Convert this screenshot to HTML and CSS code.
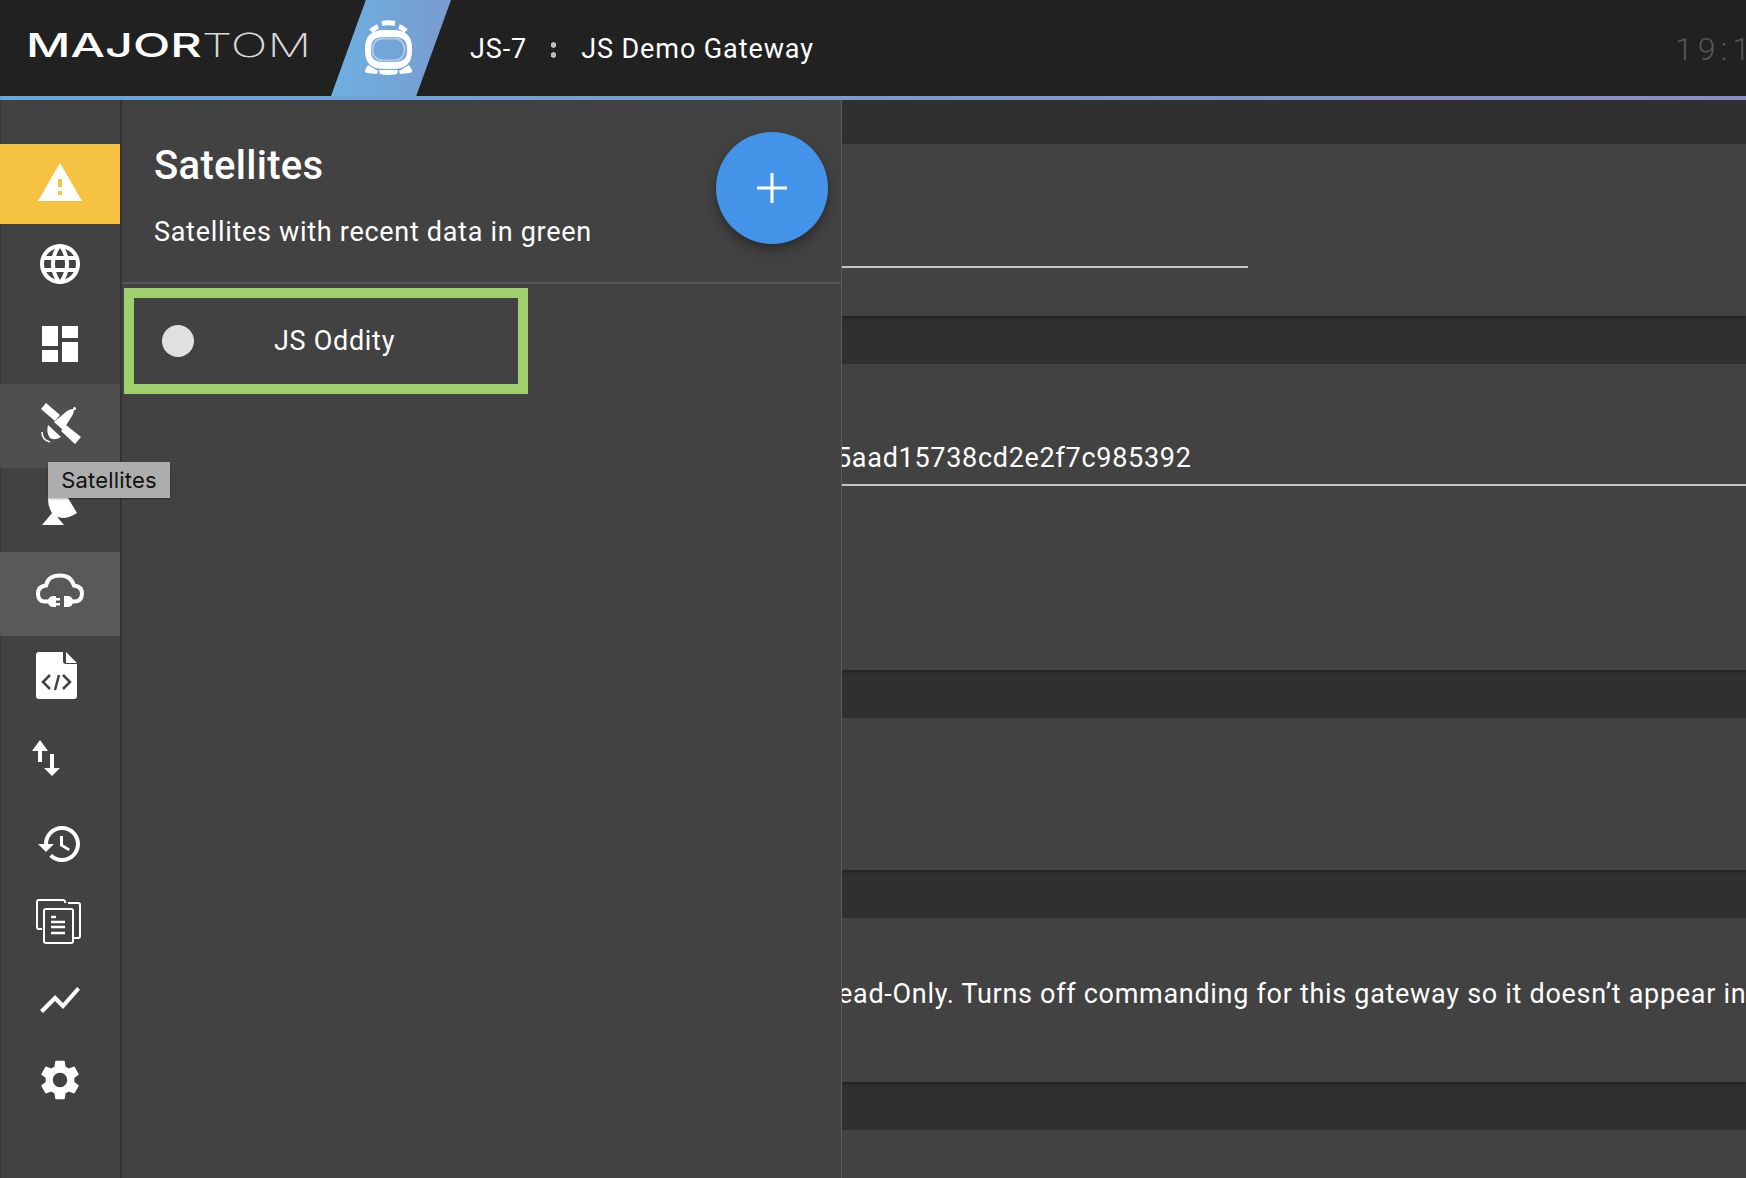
FILE: index.html
```html
<!DOCTYPE html>
<html lang="en">
<head>
    <meta charset="utf-8" />
    <title>Major Tom - JS Demo Gateway</title>
    <link rel="stylesheet" href="styles.css">
</head>
<body>
    <header class="topbar">
        <div class="logo"><span class="logo-text"><b>MAJOR</b>TOM</span></div>
        <div class="mission-badge">
            <svg class="helmet" width="76" height="72" viewBox="0 0 76 72">
                <g fill="none" stroke="#fff" stroke-width="5">
                    <path d="M32 11.500q6.500-1.500 13 0"/>
                    <path d="M21 19q3-3 7-4.500M56 19q-3-3-7-4.500"/>
                </g>
                <path fill-rule="evenodd" fill="#fff" d="M34 18h9q19 0 19 18v3q0 18-19 18h-9q-19 0-19-18v-3q0-18 19-18zM33 25q-12 0-12 11v4q0 10 12 10h11q13 0 13-10v-4q0-11-13-11z"/>
                <rect x="22.500" y="26.500" width="32" height="22" rx="10" fill="none" stroke="#fff" stroke-opacity=".4" stroke-width="2"/>
                <path d="M18 53l10 6-1 3-10-1q-3-1-2-3zM59 53l-10 6 1 3 10-1q3-1 2-3zM29 58h19l-1 4q-8 2-17 0z" fill="#fff"/>
            </svg>
        </div>
        <div class="crumbs">
            <span>JS-7</span>
            <span class="crumb-sep"></span>
            <span>JS Demo Gateway</span>
        </div>
        <div class="clock">19:1</div>
    </header>
    <div class="rainbow"></div>

    <div class="workspace">
        <nav class="rail">
            <a class="rail-item warn">
                <svg width="48" height="48" viewBox="0 0 24 24"><path d="M1 21h22L12 2 1 21zm12-3h-2v-2h2v2zm0-4h-2v-4h2v4z"/></svg>
            </a>
            <a class="rail-item">
                <svg width="48" height="48" viewBox="0 0 24 24"><path d="M11.99 2C6.47 2 2 6.48 2 12s4.47 10 9.99 10C17.52 22 22 17.52 22 12S17.52 2 11.99 2zm6.93 6h-2.95c-.32-1.25-.78-2.45-1.38-3.56 1.84.63 3.37 1.91 4.33 3.56zM12 4.04c.83 1.2 1.48 2.53 1.91 3.96h-3.82c.43-1.43 1.08-2.76 1.91-3.96zM4.26 14C4.1 13.36 4 12.69 4 12s.1-1.36.26-2h3.38c-.08.66-.14 1.32-.14 2 0 .68.06 1.34.14 2H4.26zm.82 2h2.95c.32 1.25.78 2.45 1.38 3.56-1.84-.63-3.37-1.9-4.33-3.56zm2.95-8H5.08c.96-1.66 2.49-2.93 4.33-3.56C8.81 5.55 8.35 6.75 8.03 8zM12 19.96c-.83-1.2-1.48-2.53-1.91-3.96h3.82c-.43 1.43-1.08 2.76-1.91 3.96zM14.34 14H9.66c-.09-.66-.16-1.32-.16-2 0-.68.07-1.35.16-2h4.68c.09.65.16 1.32.16 2 0 .68-.07 1.34-.16 2zm.25 5.56c.6-1.11 1.06-2.31 1.38-3.56h2.95c-.96 1.65-2.49 2.93-4.33 3.56zM16.36 14c.08-.66.14-1.32.14-2 0-.68-.06-1.34-.14-2h3.38c.16.64.26 1.31.26 2s-.1 1.36-.26 2h-3.38z"/></svg>
            </a>
            <a class="rail-item">
                <svg width="48" height="48" viewBox="0 0 24 24"><path d="M3 13h8V3H3v10zm0 8h8v-6H3v6zm10 0h8V11h-8v10zm0-18v6h8V3h-8z"/></svg>
            </a>
            <a class="rail-item hovered">
                <svg width="60" height="60" viewBox="0 1 60 60">
                    <path d="M16 8l14 12-5 6-14-12zM36 30l15 12-6 7-14-13z"/>
                    <path d="M24 27l13-11q3-2 7-2 0 4-2 7l-9 14z"/>
                    <circle cx="44.500" cy="13.500" r="1.500"/>
                    <path d="M18 30l13 12q-6 4-11 1-4-5-2-13z"/>
                    <path d="M12 37q0 8 8 10" fill="none" stroke="#fff" stroke-width="1.500"/>
                </svg>
            </a>
            <a class="rail-item">
                <svg width="60" height="60" viewBox="0 0 60 60">
                    <path d="M18 18q0 12 6 17 9 7 23-2l-9-15z"/>
                    <path d="M12 45l11-13 11 13z"/>
                </svg>
            </a>
            <a class="rail-item current">
                <svg width="60" height="50" viewBox="0 4 60 50">
                    <path d="M19 36.500h-4q-7 0-7-8 0-7 8-8 2-10 14-10 11 0 14 10 8 1 8 8 0 8-8 8h-3" fill="none" stroke="#fff" stroke-width="4"/>
                    <path d="M26 31v11h-2q-6 0-6-5.500t6-5.500zM26 33h4v2.500h-4zM26 38h4v2.500h-4zM34 31h3q6 0 6 5.500t-6 5.500h-3z"/>
                </svg>
            </a>
            <a class="rail-item">
                <svg width="60" height="60" viewBox="0 0 60 60">
                    <path d="M9 6h24v9q0 3 3 3h11v32q0 3-3 3H9q-3 0-3-3V9q0-3 3-3z"/>
                    <path d="M36 6l11 11H36z"/>
                    <path d="M20 29l-7 7 7 7M33 29l7 7-7 7M29 29l-4 15" fill="none" stroke="#424242" stroke-width="2.500"/>
                </svg>
            </a>
            <a class="rail-item">
                <svg width="60" height="60" viewBox="0 0 60 60">
                    <path d="M10 12l8 11h-6v11H8V23H2zM20 26h4v14h6l-8 8-8-8h6z"/>
                </svg>
            </a>
            <a class="rail-item">
                <svg width="48" height="48" viewBox="0 0 24 24"><path d="M13 3c-4.97 0-9 4.03-9 9H1l3.89 3.89.07.14L9 12H6c0-3.87 3.13-7 7-7s7 3.13 7 7-3.13 7-7 7c-1.93 0-3.68-.79-4.94-2.06l-1.42 1.42C8.27 19.99 10.51 21 13 21c4.97 0 9-4.03 9-9s-4.03-9-9-9zm-1 5v5l4.28 2.54.72-1.21-3.5-2.08V8H12z"/></svg>
            </a>
            <a class="rail-item">
                <svg width="60" height="60" viewBox="0 0 60 60">
                    <g fill="none" stroke="#fff" stroke-width="2">
                        <path d="M12 37H9q-2 0-2-2V10q0-2 2-2h24q2 0 2.500 3"/>
                        <path d="M38 11h10q2 0 2 2v31q0 2-2 2h-4"/>
                        <rect x="14" y="17" width="29" height="34" rx="2"/>
                        <path d="M21 25h5M21 30h14M21 35h14M21 41h14" stroke-width="2.500"/>
                    </g>
                </svg>
            </a>
            <a class="rail-item">
                <svg width="48" height="48" viewBox="0 0 24 24"><path d="M3.5 18.49l6-6.01 4 4L22 6.92l-1.41-1.41-7.09 7.97-4-4L2 16.99z"/></svg>
            </a>
            <a class="rail-item">
                <svg width="48" height="48" viewBox="0 0 24 24"><path d="M19.14 12.94c.04-.3.06-.61.06-.94 0-.32-.02-.64-.07-.94l2.03-1.58c.18-.14.23-.41.12-.61l-1.92-3.32c-.12-.22-.37-.29-.59-.22l-2.39.96c-.5-.38-1.03-.7-1.62-.94l-.36-2.54c-.04-.24-.24-.41-.48-.41h-3.84c-.24 0-.43.17-.47.41l-.36 2.54c-.59.24-1.13.57-1.62.94l-2.39-.96c-.22-.08-.47 0-.59.22L2.74 8.87c-.12.21-.08.47.12.61l2.03 1.58c-.05.3-.09.63-.09.94s.02.64.07.94l-2.03 1.58c-.18.14-.23.41-.12.61l1.92 3.32c.12.22.37.29.59.22l2.39-.96c.5.38 1.03.7 1.62.94l.36 2.54c.05.24.24.41.48.41h3.84c.24 0 .44-.17.47-.41l.36-2.54c.59-.24 1.13-.56 1.62-.94l2.39.96c.22.08.47 0 .59-.22l1.92-3.32c.12-.22.07-.47-.12-.61l-2.01-1.58zM12 15.6c-1.98 0-3.6-1.62-3.6-3.6s1.62-3.6 3.6-3.6 3.6 1.62 3.6 3.6-1.62 3.6-3.6 3.6z"/></svg>
            </a>
            <div class="tooltip">Satellites</div>
        </nav>

        <aside class="drawer">
            <div class="drawer-head">
                <div>
                    <h2 class="drawer-title">Satellites</h2>
                    <p class="drawer-sub">Satellites with recent data in green</p>
                </div>
                <button class="fab">
                    <svg width="30" height="30" viewBox="0 0 30 30"><path d="M15 0v30M0 15h30" stroke="#fff" stroke-width="3"/></svg>
                </button>
            </div>
            <div class="sat-row">
                <span class="sat-dot"></span>
                <span>JS Oddity</span>
            </div>
        </aside>

        <main class="settings">
            <section class="card card-name"><div class="field field-short"></div></section>
            <section class="card card-token"><div class="field">5aad15738cd2e2f7c985392</div></section>
            <section class="card card-blank"></section>
            <section class="card card-readonly"><p class="clipped-text">ead-Only. Turns off commanding for this gateway so it doesn’t appear in</p></section>
            <section class="card card-last"></section>
        </main>
    </div>
</body>
</html>
```

FILE: styles.css
```css
* {
    box-sizing: border-box;
}

body {
    font-family: Roboto, sans-serif;
    background-color: #303030;
    color: #fff;
    margin: 0;
    width: 1746px;
    height: 1178px;
    overflow: hidden;
    display: flex;
    flex-direction: column;
}

/* top bar */
.topbar {
    height: 96px;
    flex: none;
    background-color: #212121;
    display: flex;
    align-items: center;
    padding-left: 26px;
    overflow: hidden;
}

.logo {
    width: 305px;
    height: 96px;
    padding-bottom: 6px;
    display: flex;
    align-items: center;
}

.logo-text {
    display: inline-block;
    font-family: Inter, sans-serif;
    font-size: 33px;
    font-weight: 200;
    color: #d8d8d8;
    line-height: 1;
    white-space: nowrap;
    transform: scaleX(1.475);
    transform-origin: left center;
}

.logo-text b {
    font-weight: 500;
    color: #fff;
}

.mission-badge {
    width: 120px;
    height: 96px;
    background: linear-gradient(90deg, #6cb0e0, #7a9bcf);
    clip-path: polygon(29% 0, 100% 0, 71% 100%, 0 100%);
    display: flex;
    align-items: center;
    justify-content: center;
}

.helmet {
    margin-left: -6px;
}

.crumbs {
    margin-left: 19px;
    padding-top: 2px;
    display: flex;
    align-items: center;
    font-size: 27px;
    letter-spacing: 0.9px;
}

.crumb-sep {
    width: 7px;
    height: 16px;
    margin: 2px 24px 0 23px;
    background: radial-gradient(circle at 3.5px 3px, #bbb 2.5px, transparent 3px),
                radial-gradient(circle at 3.5px 13px, #bbb 2.5px, transparent 3px);
}

.clock {
    margin-left: auto;
    padding-top: 2px;
    width: 71px;
    font-size: 32px;
    font-weight: 300;
    letter-spacing: 5px;
    color: #555;
    white-space: nowrap;
}

.rainbow {
    height: 4px;
    flex: none;
    background: linear-gradient(90deg, #66a9dc, #8b8cc6);
}

.workspace {
    flex: 1;
    display: flex;
    min-height: 0;
}

/* icon rail */
.rail {
    width: 122px;
    flex: none;
    position: relative;
    background-color: #424242;
    border-left: 1px solid #383838;
    border-right: 2px solid #333;
    padding-top: 44px;
    display: grid;
    grid-template-rows: 80px 80px 80px 84px 84px 84px 80px 84px 88px 68px 88px 72px;
    align-content: start;
}

.rail-item {
    display: flex;
    align-items: center;
    justify-content: center;
    margin-left: -1px;
}

.rail-item svg {
    fill: #fff;
    display: block;
}

.warn {
    background-color: #f5c242;
}

.warn svg {
    margin-top: -2px;
}

.hovered {
    background-color: #4f4f4f;
}

.current {
    background-color: #595959;
}

.tooltip {
    position: absolute;
    left: 47px;
    top: 362px;
    width: 122px;
    height: 36px;
    background-color: #adadad;
    color: #111;
    font-family: Inter, sans-serif;
    font-size: 22px;
    letter-spacing: 0.2px;
    line-height: 36px;
    text-align: center;
    box-shadow: 0 1px 2px rgba(0, 0, 0, 0.3);
    z-index: 2;
}

/* satellites drawer */
.drawer {
    width: 720px;
    flex: none;
    background-color: #424242;
    border-right: 1px solid #5c5c5c;
}

.drawer-head {
    height: 184px;
    border-bottom: 2px solid #555;
    padding: 32px 13px 0 32px;
    display: flex;
    justify-content: space-between;
    align-items: flex-start;
}

.drawer-title {
    margin: 10px 0 0;
    font-size: 40px;
    font-weight: 500;
    letter-spacing: 0.3px;
    line-height: 48px;
}

.drawer-sub {
    margin: 24px 0 0;
    font-size: 27px;
    letter-spacing: 0.7px;
    line-height: 36px;
}

.fab {
    width: 112px;
    height: 112px;
    border: none;
    border-radius: 50%;
    background-color: #4394e9;
    box-shadow: 0 6px 12px rgba(0, 0, 0, 0.35);
    display: flex;
    align-items: center;
    justify-content: center;
    padding: 0;
}

.sat-row {
    width: 404px;
    height: 106px;
    margin: 4px 0 0 2px;
    border: 10px solid #a0d06e;
    padding-left: 28px;
    display: flex;
    align-items: center;
    font-size: 27px;
    letter-spacing: 0.7px;
}

.sat-dot {
    width: 32px;
    height: 32px;
    border-radius: 50%;
    background-color: #e0e0e0;
    margin-right: 80px;
}

/* gateway settings, behind the drawer */
.settings {
    flex: 1;
    min-width: 0;
    overflow: hidden;
    padding-top: 44px;
}

.card {
    background-color: #424242;
    margin-bottom: 48px;
    box-shadow: 0 2px 3px rgba(0, 0, 0, 0.3);
    overflow: hidden;
}

.card-name {
    height: 172px;
    padding-top: 122px;
}

.card-token {
    height: 306px;
    padding-top: 78px;
}

.card-blank {
    height: 152px;
}

.card-readonly {
    height: 164px;
    padding-top: 58px;
}

.card-last {
    height: 60px;
}

.field {
    height: 44px;
    border-bottom: 2px solid #c8c8c8;
    font-size: 27px;
    letter-spacing: 0.7px;
    line-height: 33px;
    text-indent: -6px;
    white-space: nowrap;
}

.field-short {
    height: 2px;
    width: 406px;
}

.clipped-text {
    margin: 0 0 0 -4px;
    font-size: 27px;
    letter-spacing: 0.7px;
    line-height: 36px;
    white-space: nowrap;
}
```
